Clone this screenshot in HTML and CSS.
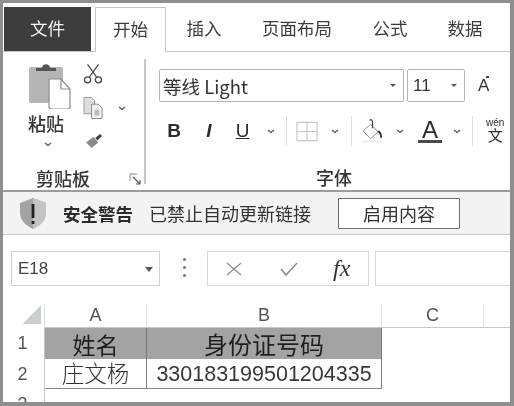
FILE: index.html
```html
<!DOCTYPE html>
<html lang="zh-CN">
<head>
  <meta charset="UTF-8">
  <title>Excel 安全警告</title>
  <link rel="stylesheet" href="styles.css">
</head>
<body>
  <div class="window">
    <!-- tabs -->
    <nav class="tabs">
      <div class="tab tab-file">文件</div>
      <div class="tab tab-active">开始</div>
      <div class="tab tab-insert">插入</div>
      <div class="tab tab-layout">页面布局</div>
      <div class="tab tab-formula">公式</div>
      <div class="tab tab-data">数据</div>
    </nav>

    <!-- ribbon -->
    <section class="ribbon">
      <div class="group group-clipboard">
        <div class="clip-tools">
          <div class="paste">
            <svg class="icon-paste" width="44" height="48" viewBox="0 0 44 48">
              <rect x="1" y="6" width="34" height="36" rx="2" fill="#b5b5b5"/>
              <path d="M8 10 V7 H14 C14 2 22 2 22 7 H28 V10 Z" fill="#555"/>
              <path d="M22 18 H33 L42 28 V46 Q42 48 40 48 H24 Q21 48 21 46 V20 Q21 18 22 18 Z" fill="#fff" stroke="#8c8c8c" stroke-width="1.2"/>
              <path d="M33 18 V28 H42" fill="none" stroke="#8c8c8c" stroke-width="1.2"/>
            </svg>
            <span class="paste-label">粘贴</span>
            <svg class="chev" width="8" height="5" viewBox="0 0 8 5"><path d="M1 1 L4 3.5 L7 1" fill="none" stroke="#555" stroke-width="1.3"/></svg>
          </div>
          <div class="clip-icons">
            <svg width="20" height="21" viewBox="0 0 22 22">
              <path d="M5 1 L15 15 M17 1 L7 15" fill="none" stroke="#444" stroke-width="1.3"/>
              <circle cx="5" cy="18" r="3.4" fill="none" stroke="#444" stroke-width="1.4"/>
              <circle cx="17" cy="18" r="3.4" fill="none" stroke="#444" stroke-width="1.4"/>
            </svg>
            <div class="copy-row">
              <svg width="21" height="24" viewBox="0 0 22 24">
                <path d="M1 1 H9 L12 4 V18 H1 Z" fill="#ddd" stroke="#999"/>
                <path d="M9 8 H16 L20 12 V23 H9 Z" fill="#f2f2f2" stroke="#888"/>
                <path d="M12 14 H17 V20 H12 Z" fill="#bbb"/>
              </svg>
              <svg class="chev" width="8" height="5" viewBox="0 0 8 5"><path d="M1 1 L4 3.5 L7 1" fill="none" stroke="#555" stroke-width="1.3"/></svg>
            </div>
            <svg class="icon-brush" width="17" height="15" viewBox="0 0 18 16">
              <path d="M0 9 L8 3 L13 9 L6 15 Z" fill="#8a8a8a"/>
              <path d="M10 4 L15 0 L17 2 L12 7 Z" fill="#3f3f3f"/>
            </svg>
          </div>
        </div>
        <div class="group-foot">
          <span class="group-label">剪贴板</span>
          <svg class="launcher" width="12" height="12" viewBox="0 0 12 12">
            <path d="M1 8 V1 H8" fill="none" stroke="#888" stroke-width="1"/>
            <path d="M4 4 L11 11 M11 7 V11 H7" fill="none" stroke="#555" stroke-width="1.1"/>
          </svg>
        </div>
      </div>

      <div class="group group-font">
        <div class="combo-row">
          <div class="combo combo-name"><span class="font-name">等线 Light</span><i class="caret-small"></i></div>
          <div class="combo combo-size"><span>11</span><i class="caret-small"></i></div>
          <div class="grow-font">A<i class="grow-mark"></i></div>
        </div>
        <div class="format-row">
          <b class="fmt fmt-b">B</b>
          <i class="fmt fmt-i">I</i>
          <u class="fmt fmt-u">U</u>
          <svg class="chev" width="8" height="5" viewBox="0 0 8 5"><path d="M1 1 L4 3.5 L7 1" fill="none" stroke="#555" stroke-width="1.3"/></svg>
          <span class="sep"></span>
          <svg class="icon-border" width="22" height="21" viewBox="0 0 24 22"><path d="M1 1 H23 V21 H1 Z M12 1 V21 M1 11 H23" fill="none" stroke="#c6c6c6" stroke-width="1.2"/></svg>
          <svg class="chev" width="8" height="5" viewBox="0 0 8 5"><path d="M1 1 L4 3.5 L7 1" fill="none" stroke="#555" stroke-width="1.3"/></svg>
          <span class="sep"></span>
          <svg class="icon-fill" width="21" height="24" viewBox="0 0 22 24">
            <path d="M1 12 L9 5 L17 13 L9 20 Z" fill="#fff" stroke="#888"/>
            <path d="M8 1 Q10 -1 11 2 V9" fill="none" stroke="#444" stroke-width="1.3"/>
            <path d="M17 12 Q20 14 20 19" fill="none" stroke="#333" stroke-width="2"/>
            <rect x="0" y="22" width="20" height="2" fill="#eee"/>
          </svg>
          <svg class="chev" width="8" height="5" viewBox="0 0 8 5"><path d="M1 1 L4 3.5 L7 1" fill="none" stroke="#555" stroke-width="1.3"/></svg>
          <div class="font-color">A</div>
          <svg class="chev" width="8" height="5" viewBox="0 0 8 5"><path d="M1 1 L4 3.5 L7 1" fill="none" stroke="#555" stroke-width="1.3"/></svg>
          <span class="sep"></span>
          <div class="phonetic"><small>wén</small><span>文</span></div>
        </div>
        <div class="group-foot font-foot"><span class="group-label">字体</span></div>
      </div>
    </section>

    <!-- security warning -->
    <section class="alert">
      <svg class="shield" width="28" height="31" viewBox="0 0 28 31">
        <path d="M14 0 L27 5 V15 C27 23 20 28 14 31 C8 28 1 23 1 15 V5 Z" fill="#a3a3a3"/>
        <path d="M14 0 L27 5 V15 C27 23 20 28 14 31 Z" fill="#c4c4c4"/>
        <rect x="12.6" y="6" width="2.8" height="14" fill="#222"/>
        <rect x="12.6" y="23" width="2.8" height="3" fill="#222"/>
      </svg>
      <strong class="alert-title">安全警告</strong>
      <span class="alert-text">已禁止自动更新链接</span>
      <button class="alert-btn">启用内容</button>
    </section>

    <!-- formula bar -->
    <section class="formula-bar">
      <div class="name-box"><span>E18</span><i class="caret"></i></div>
      <div class="dots"><i></i><i></i><i></i></div>
      <div class="fx-box">
        <svg width="18" height="16" viewBox="0 0 18 16"><path d="M2 2 L16 14 M16 2 L2 14" stroke="#8a8a8a" stroke-width="1.2"/></svg>
        <svg width="20" height="16" viewBox="0 0 20 16"><path d="M2 8 L7 14 L18 2" fill="none" stroke="#8a8a8a" stroke-width="1.5"/></svg>
        <span class="fx"><em>f</em><em>x</em></span>
      </div>
      <div class="formula-input"></div>
    </section>

    <!-- sheet -->
    <section class="sheet">
      <div class="corner"><i></i></div>
      <div class="col-head head-a">A</div>
      <div class="col-head head-b">B</div>
      <div class="col-head head-c">C</div>
      <div class="col-head head-d"></div>

      <div class="row-head">1</div>
      <div class="cell cell-title cell-name">姓名</div>
      <div class="cell cell-title cell-idtitle">身份证号码</div>
      <div class="cell-empty"></div>
      <div class="cell-empty"></div>

      <div class="row-head">2</div>
      <div class="cell cell-data cell-person">庄文杨</div>
      <div class="cell cell-data cell-id">330183199501204335</div>
      <div class="cell-empty"></div>
      <div class="cell-empty"></div>

      <div class="row-head row-cut">3</div>
    </section>
  </div>
</body>
</html>
```

FILE: styles.css
```css
* {
  box-sizing: border-box;
}

html, body {
  margin: 0;
  padding: 0;
}

body {
  width: 514px;
  height: 406px;
  overflow: hidden;
  background-color: #fff;
  font-family: "Noto Sans CJK SC", "Liberation Sans", sans-serif;
  color: #333;
}

.window {
  width: 514px;
  height: 406px;
  overflow: hidden;
  border: 3px solid #8f8f8f;
  border-right-width: 4px;
  border-bottom-width: 4px;
  background-color: #fff;
  filter: blur(0.35px);
}

/* tabs */
.tabs {
  display: flex;
  height: 49px;
  padding-top: 4px;
  border-bottom: 1px solid #c4c4c4;
  font-size: 17.5px;
}

.tab {
  display: flex;
  align-items: center;
  justify-content: center;
  padding-bottom: 3px;
  color: #3c3c3c;
}

.tab-file {
  width: 87px;
  margin-left: 1px;
  background-color: #3d3d3d;
  color: #f4f4f4;
}

.tab-active {
  width: 71px;
  height: 45px;
  margin-left: 4px;
  background-color: #fff;
  border: 1px solid #c4c4c4;
  border-bottom: 1px solid #fff;
}

.tab-insert { width: 76px; }
.tab-layout { width: 110px; }
.tab-formula { width: 76px; }
.tab-data { width: 74px; }

/* ribbon */
.ribbon {
  display: flex;
  height: 140px;
  border-bottom: 2px solid #9c9c9c;
}

.group-clipboard {
  width: 143px;
  margin: 7px 0 6px;
  border-right: 2px solid #c9c9c9;
  display: flex;
  flex-direction: column;
}

.clip-tools {
  display: flex;
  flex: 1;
}

.paste {
  width: 76px;
  padding: 2px 0 0 25px;
  display: flex;
  flex-direction: column;
  align-items: flex-start;
}

.paste-label {
  margin-top: 2px;
  font-size: 18px;
  font-weight: 500;
  line-height: 24px;
  color: #333;
}

.paste .chev {
  margin: 7px 0 0 16px;
}

.clip-icons {
  display: flex;
  flex-direction: column;
  gap: 12px;
  padding: 4px 0 0 4px;
}

.copy-row {
  display: flex;
  align-items: center;
  gap: 14px;
}

.icon-brush {
  margin: 2px 0 0 3px;
}

.group-foot {
  display: flex;
  align-items: center;
  flex: none;
  height: 26px;
  margin-bottom: -7px;
  padding-left: 33px;
}

.group-label {
  font-size: 18px;
  font-weight: 500;
  color: #333;
}

.launcher {
  margin: 2px 0 0 39px;
}

.group-font {
  flex: 1;
  padding: 17px 0 0 13px;
  display: flex;
  flex-direction: column;
}

.combo-row {
  display: flex;
  align-items: center;
}

.combo {
  display: flex;
  align-items: center;
  justify-content: space-between;
  height: 33px;
  padding: 0 7px 0 3px;
  border: 1px solid #b4b4b4;
  border-radius: 2px;
}

.combo-name {
  width: 245px;
}

.font-name {
  font-size: 18.5px;
}

.combo-size {
  width: 58px;
  margin-left: 3px;
  padding-left: 5px;
  font-family: "Liberation Sans", sans-serif;
  font-size: 17px;
}

.caret-small {
  width: 0;
  height: 0;
  border: 3px solid transparent;
  border-top: 3px solid #555;
  margin-top: 3px;
}

.grow-font {
  position: relative;
  margin-left: 13px;
  font-family: "Liberation Sans", sans-serif;
  font-size: 17px;
  color: #333;
}

.grow-mark {
  position: absolute;
  top: 0;
  right: 0;
  width: 3px;
  height: 2px;
  background-color: #444;
}

.format-row {
  display: flex;
  align-items: center;
  height: 30px;
  margin-top: 14px;
  padding-left: 6px;
  font-family: "Liberation Sans", sans-serif;
  font-size: 19px;
  color: #2d2d2d;
}

.fmt {
  width: 18px;
  text-align: center;
}

.fmt-b { font-weight: 700; }
.fmt-i { margin-left: 21px; width: 10px; font-weight: 700; }
.fmt-u { margin-left: 20px; width: 17px; }

.format-row .chev {
  flex: none;
}

.fmt-u + .chev { margin-left: 16px; }

.sep {
  width: 1px;
  height: 30px;
  background-color: #dcdcdc;
  margin-left: 11px;
}

.icon-border { margin-left: 9px; }
.icon-border + .chev { margin-left: 13px; }
.icon-border + .chev + .sep { margin-left: 12px; }

.icon-fill { margin-left: 10px; }
.icon-fill + .chev { margin-left: 13px; }

.font-color {
  width: 24px;
  margin-left: 14px;
  text-align: center;
  font-size: 24px;
  line-height: 21px;
  border-bottom: 3px solid #4a4a4a;
}

.font-color + .chev { margin-left: 11px; }

.phonetic {
  display: flex;
  flex-direction: column;
  align-items: center;
  gap: 2px;
  margin-left: 13px;
  line-height: 1;
}

.phonetic small {
  font-size: 10px;
  line-height: 8px;
}

.phonetic span {
  font-family: "Liberation Sans", "Noto Sans CJK SC", sans-serif;
  font-size: 15px;
  line-height: 14px;
}

.font-foot {
  height: 26px;
  margin: 18px 0 0;
  padding-left: 157px;
}

/* security warning */
.alert {
  display: flex;
  align-items: center;
  height: 43px;
  padding-left: 16px;
  background-color: #f3f3f3;
  border-bottom: 1px solid #c8c8c8;
}

.shield { flex: none; }

.alert-title {
  margin-left: 16px;
  font-weight: 700;
  font-size: 17.5px;
  color: #2a2a2a;
}

.alert-text {
  margin-left: 16px;
  font-size: 18px;
  color: #333;
}

.alert-btn {
  width: 122px;
  height: 31px;
  margin-left: 27px;
  background-color: #fff;
  border: 1px solid #6f6f6f;
  border-radius: 1px;
  font-family: inherit;
  font-size: 18px;
  color: #333;
  padding: 0;
}

/* formula bar */
.formula-bar {
  display: flex;
  align-items: flex-start;
  height: 69px;
  padding: 16px 0 0 8px;
}

.name-box {
  display: flex;
  align-items: center;
  justify-content: space-between;
  width: 149px;
  height: 35px;
  padding: 0 6px;
  border: 1px solid #d2d2d2;
  font-family: "Liberation Sans", sans-serif;
  font-size: 17px;
  color: #444;
}

.caret {
  width: 0;
  height: 0;
  border: 4px solid transparent;
  border-top: 5px solid #555;
  margin-top: 5px;
}

.dots {
  display: flex;
  flex-direction: column;
  gap: 5px;
  width: 47px;
  height: 35px;
  padding: 7px 0 0 23px;
}

.dots i {
  width: 3px;
  height: 3px;
  background-color: #777;
  border-radius: 50%;
}

.fx-box {
  display: flex;
  align-items: center;
  width: 162px;
  height: 35px;
  padding-left: 17px;
  gap: 36px;
  border: 1px solid #d8d8d8;
}

.fx {
  margin-left: -2px;
  font-family: "Liberation Serif", serif;
  font-size: 24px;
  color: #333;
}

.formula-input {
  flex: 1;
  height: 35px;
  margin-left: 6px;
  border: 1px solid #d8d8d8;
  border-right: none;
}

/* sheet */
.sheet {
  display: grid;
  grid-template-columns: 42px 102px 235px 102px 1fr;
  grid-template-rows: 24px 31px 30px 30px;
}

.corner {
  display: flex;
  align-items: flex-end;
  justify-content: flex-end;
  padding: 0 3px 4px 0;
  border-right: 1px solid #dedede;
}

.corner i {
  width: 19px;
  height: 19px;
  background: linear-gradient(135deg, transparent 50%, #c9cfcb 50%);
}

.col-head {
  display: flex;
  align-items: center;
  justify-content: center;
  border-right: 1px solid #e2e2e2;
  border-bottom: 1px solid #c6c6c6;
  font-family: "Liberation Sans", sans-serif;
  font-size: 18px;
  color: #555;
}

.head-d {
  border-right: none;
}

.row-head {
  display: flex;
  align-items: center;
  justify-content: center;
  padding-right: 2px;
  border-right: 1px solid #c6c6c6;
  font-family: "Liberation Sans", sans-serif;
  font-size: 18px;
  color: #555;
}

.row-cut {
  overflow: hidden;
  align-items: flex-start;
  padding-top: 5px;
}

.cell {
  display: flex;
  align-items: center;
  justify-content: center;
  border-right: 1px solid #7a7a7a;
  font-size: 22.5px;
  color: #2b2b2b;
}

.cell-title {
  background-color: #a3a3a3;
  color: #1f1f1f;
}

.cell-name { font-size: 23px; }
.cell-idtitle { font-size: 24px; }

.cell-data {
  border-bottom: 1px solid #8c8c8c;
  font-weight: 300;
  color: #333;
}

.cell-person {
  padding-bottom: 4px;
}

.cell-id {
  padding-top: 2px;
  font-family: "Liberation Sans", sans-serif;
  font-weight: 400;
  font-size: 21.5px;
  color: #3a3340;
}
```
